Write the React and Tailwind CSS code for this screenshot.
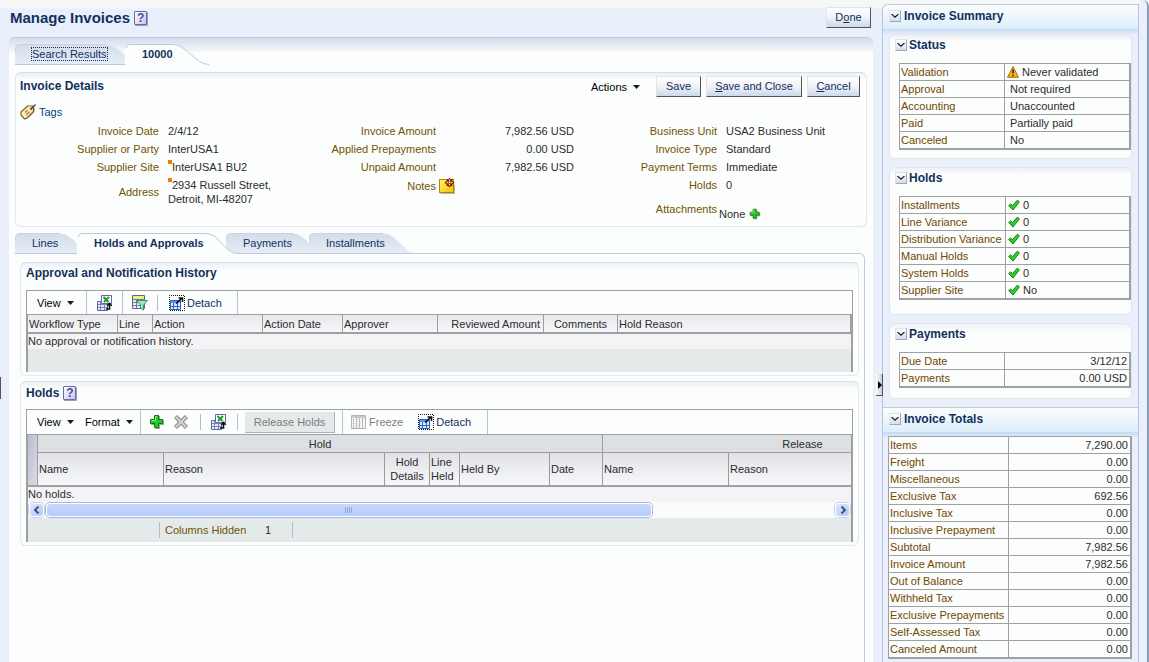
import React from 'react';

const statusRows = [
  { label: 'Validation', value: 'Never validated', icon: 'warning' },
  { label: 'Approval', value: 'Not required' },
  { label: 'Accounting', value: 'Unaccounted' },
  { label: 'Paid', value: 'Partially paid' },
  { label: 'Canceled', value: 'No' },
];

const holdRows = [
  { label: 'Installments', value: '0', icon: 'check' },
  { label: 'Line Variance', value: '0', icon: 'check' },
  { label: 'Distribution Variance', value: '0', icon: 'check' },
  { label: 'Manual Holds', value: '0', icon: 'check' },
  { label: 'System Holds', value: '0', icon: 'check' },
  { label: 'Supplier Site', value: 'No', icon: 'check' },
];

const paymentRows = [
  { label: 'Due Date', value: '3/12/12' },
  { label: 'Payments', value: '0.00 USD' },
];

const totalRows = [
  { label: 'Items', value: '7,290.00' },
  { label: 'Freight', value: '0.00' },
  { label: 'Miscellaneous', value: '0.00' },
  { label: 'Exclusive Tax', value: '692.56' },
  { label: 'Inclusive Tax', value: '0.00' },
  { label: 'Inclusive Prepayment', value: '0.00' },
  { label: 'Subtotal', value: '7,982.56' },
  { label: 'Invoice Amount', value: '7,982.56' },
  { label: 'Out of Balance', value: '0.00' },
  { label: 'Withheld Tax', value: '0.00' },
  { label: 'Exclusive Prepayments', value: '0.00' },
  { label: 'Self-Assessed Tax', value: '0.00' },
  { label: 'Canceled Amount', value: '0.00' },
];

/* ---------- icons ---------- */

const Caret = () => (
  <svg className="w-[7px] h-1 shrink-0" viewBox="0 0 7 4" fill="#1a1a1a">
    <path d="M0 0h7L3.5 4z" />
  </svg>
);

const TagIcon = () => (
  <svg className="w-4 h-4" viewBox="0 0 16 16">
    <path d="M4 15.800l5.500-3.300 4.500-5V4" fill="none" stroke="#b0b0a8" strokeWidth="1.400" />
    <path d="M1 8L7.500 2h5l1 1v4.500L6.500 14.500 4 14.300 1 11z" fill="#f8eebc" stroke="#7a6420" strokeWidth="1.200" />
    <path d="M5 8.500l2.500-2.300M6 11l3.500-3.300" stroke="#d0643c" strokeWidth="1.200" />
    <path d="M11 5L15.500.5" stroke="#404048" strokeWidth="1.300" />
    <circle cx="11.200" cy="4.800" r="1.100" fill="#404048" />
  </svg>
);

const NoteIcon = () => (
  <svg className="w-4 h-4" viewBox="0 0 16 16">
    <defs>
      <linearGradient id="note" x1="0" y1="0" x2="1" y2="1">
        <stop offset="0" stopColor="#fff36a" />
        <stop offset="1" stopColor="#f2c400" />
      </linearGradient>
    </defs>
    <path d="M1.500 15.500h14v-9" fill="none" stroke="#b4b4b0" />
    <rect x=".5" y="1.500" width="14" height="13" fill="url(#note)" stroke="#b8860b" />
    <path d="M10.500 0L15.500 4.500 10.500 9.500 5.500 4.500z" fill="#7c1c10" />
    <path d="M7.500 1.500h2M11.500 1.500h2M7.500 7.500h2M11.500 7.500h2" stroke="#7c1c10" />
    <path d="M10.500 1.500v2M10.500 5.500v2M7.500 4.500h2M11.500 4.500h2" stroke="#ffe860" strokeWidth="1.300" />
    <path d="M10 4h1v1h-1z" fill="#fff" />
  </svg>
);

const PlusIcon = ({ className }) => (
  <svg className={className} viewBox="0 0 16 16">
    <path d="M6 2h5v4h4v5h-4v4H6v-4H2V6h4z" fill="#9aa49a" />
    <path d="M5.500 1.500h4v4h4v4h-4v4h-4v-4h-4v-4h4z" fill="#28c828" stroke="#0b7a0b" />
    <path d="M6.500 2.500v4h-4M7 2.500h1" fill="none" stroke="#8cf08c" />
  </svg>
);

const DeleteIcon = () => (
  <svg className="w-4 h-4" viewBox="0 0 16 16">
    <path d="M2.500 2.500l11 11M13.500 2.500l-11 11" stroke="#8c8c8c" strokeWidth="4.300" />
    <path d="M3 3l10 10M13 3L3 13" stroke="#d2d2d2" strokeWidth="2.300" />
  </svg>
);

const ExcelIcon = () => (
  <svg className="w-4 h-4" viewBox="0 0 16 16">
    <path d="M.5 6.500h10v9H.5z" fill="#e4e8f8" stroke="#5c64a4" />
    <path d="M1 9.500h9M1 12.500h9M3.500 7v8M7.500 7v8" stroke="#7c84bc" />
    <path d="M4.500.5h10v8h-10z" fill="#fff" stroke="#6068a8" />
    <path d="M6.500 2l5 5M12 2L7 7" stroke="#1c9c30" strokeWidth="2" />
    <path d="M9 14h3.500V9.500M10.300 10.800l2.200-2.300 2.300 2.300" fill="none" stroke="#111" strokeWidth="1.600" />
  </svg>
);

const FilterIcon = () => (
  <svg className="w-4 h-4" viewBox="0 0 16 16">
    <path d="M.5.5h12v13H.5z" fill="#e8ecf8" stroke="#5c64a4" />
    <path d="M1 1h11v3H1z" fill="#f6ec6c" />
    <path d="M1 4.500h11M1 7.500h11M1 10.500h11M4.500 5v8M8.500 5v8" stroke="#7078b0" />
    <path d="M4.500 5.500h11l-4 4.500v5l-3-2v-3z" fill="#a4e4b8" stroke="#3c9464" />
  </svg>
);

const DetachIcon = () => (
  <svg className="w-4 h-4" viewBox="0 0 16 16">
    <path d="M.5.5h15v15H.5z" fill="#fff" stroke="#111" strokeDasharray="1 1" strokeDashoffset=".5" />
    <path d="M1.500 5.500h10v9h-10z" fill="#dceafc" stroke="#2c64cc" />
    <path d="M2 6h9v2H2z" fill="#5c94ec" />
    <path d="M2 11.500h9M4.500 8v6M8.500 8v6" stroke="#2c64cc" />
    <path d="M7 8.500l5.500-5M9.500 3h4v4" fill="none" stroke="#111" strokeWidth="1.600" />
  </svg>
);

const FreezeIcon = () => (
  <svg className="w-4 h-4" viewBox="0 0 16 16">
    <path d="M.5 1.500h14v13H.5z" fill="#f4f4f4" stroke="#b4b4b4" />
    <path d="M1 2h13v2H1z" fill="#c8c8c8" />
    <path d="M5.500 2v12M8.500 4v10M11.500 4v10" stroke="#b8b8b8" />
    <path d="M2.500 5v9" stroke="#909090" strokeDasharray="1 1" />
  </svg>
);

const WarningIcon = () => (
  <svg className="w-3 h-3 shrink-0" viewBox="0 0 12 12">
    <path d="M6 .6L11.500 11.300H.5z" fill="#fcb414" stroke="#b06c00" />
    <path d="M6 3.500v4M6 8.700v1.500" stroke="#222" strokeWidth="1.500" />
  </svg>
);

const CheckIcon = () => (
  <svg className="w-3 h-3 shrink-0" viewBox="0 0 12 12">
    <path d="M.7 6.500l2-1.500 1.800 1.700L9.300 1.200l2.100 1.600L5 11z" fill="#30d030" stroke="#0c800c" strokeLinejoin="round" />
  </svg>
);

const HelpButton = () => (
  <button
    type="button"
    aria-label="Help"
    className="flex h-[14px] w-[13px] items-center justify-center rounded-[1px] border border-[#6a6aa8] bg-linear-to-br from-white to-[#c4c4ec] text-xs leading-3 font-bold text-[#4c4c94] shadow-[1px_1px_0_#9c9cb8]"
  >
    ?
  </button>
);

/* ---------- shared parts ---------- */

const PushButton = ({ children, className = '' }) => (
  <button
    type="button"
    className={`h-[21px] border border-t-[#e4e4e4] border-l-[#e4e4e4] border-r-[#555] border-b-[#555] bg-linear-to-b from-[#fdfefe] via-[#f0f3f8] to-[#ccd8ea] pb-0.5 text-center text-[#12305c] ${className}`}
  >
    {children}
  </button>
);

const MenuButton = ({ children, className = '' }) => (
  <button type="button" className={`flex items-center gap-1.5 text-black ${className}`}>
    {children}
    <Caret />
  </button>
);

const ToolDivider = () => <span className="h-full w-px bg-[#b4c4dc]" />;
const ShortDivider = () => <span className="h-4 w-px bg-[#b0bccc]" />;

const DetachButton = () => (
  <button type="button" className="flex items-center gap-0.5 text-[#12305c]">
    <DetachIcon />
    Detach
  </button>
);

// Left-rounded tab whose right edge slopes away
const Tab = ({ width, slope, fade, children, className }) => {
  const end = fade
    ? `H${width - slope} C${width - slope + 14} 0.5 ${width - 12} 20.5 ${width} 20.5`
    : `H${width - slope} Q${width - slope + 9} 1 ${width} 11 V20.5`;
  return (
    <a href="#" className={`relative h-[21px] pl-[17px] leading-[21px] text-[#12305c] ${className}`}>
      <svg className="absolute inset-0 h-full w-full" viewBox={`0 0 ${width} 21`} preserveAspectRatio="none">
        <defs>
          <linearGradient id="tabFill" x1="0" y1="0" x2="0" y2="1">
            <stop offset="0" stopColor="#d3dde9" />
            <stop offset="1" stopColor="#e6edf8" />
          </linearGradient>
        </defs>
        <path d={`M0 20.5 V5 Q0 .5 5 .5 ${end} Z`} fill="url(#tabFill)" />
        <path d={`M0 20.500 H${width}`} stroke="#bcc9dc" />
        <path d={`M.5 8 V5 Q.5 .5 5 .5 H${width - slope}`} fill="none" stroke="#c8d4e2" />
      </svg>
      <span className="relative">{children}</span>
    </a>
  );
};

const ActiveTab = ({ width, slope, children, className }) => (
  <a href="#" aria-current="page" className={`relative z-10 h-[21px] pl-[17px] leading-[21px] font-bold text-[#12305c] ${className}`}>
    <svg className="absolute inset-0 h-full w-full" viewBox={`0 0 ${width} 21`} preserveAspectRatio="none">
      <path d={`M0 21 V5 Q1 .5 5 .5 H${width - slope} C${width - slope + 14} 0.5 ${width - 14} 20.5 ${width} 20.5 V21 Z`} fill="#fcfdfd" />
      <path d={`M1 4 Q2 .5 5 .5 H${width - slope} C${width - slope + 14} 0.5 ${width - 14} 20.5 ${width} 20.5`} fill="none" stroke="#bcc9dc" />
    </svg>
    <span className="relative">{children}</span>
  </a>
);

const Panel = ({ children, className = '' }) => (
  <section className={`rounded-md border border-[#e2e8ee] border-t-[#d4dfec] bg-linear-to-b from-[#eeeff6] via-[#fcfdfd] via-[7px] to-[#fcfdfd] ${className}`}>
    {children}
  </section>
);

const Term = ({ children }) => <dt className="self-center text-right text-[#705400]">{children}</dt>;
const Value = ({ children, className = 'pl-[9px]' }) => <dd className={`py-0.5 ${className}`}>{children}</dd>;
const Marker = () => <span className="h-1 w-1 bg-[#ec7c0c]" />;

const ToggleButton = ({ label }) => (
  <button
    type="button"
    aria-label={label}
    className="flex h-3 w-3 items-center justify-center border border-[#e0e4ea] border-r-[#9ca8bc] border-b-[#9ca8bc] bg-linear-to-b from-white to-[#d4dce8]"
  >
    <svg className="h-1 w-2" viewBox="0 0 8 4">
      <path d="M.5 0L4 3.200 7.500 0" fill="none" stroke="#222" strokeWidth="1.200" />
    </svg>
  </button>
);

const SummaryTable = ({ rows, labelWidth, numeric, name }) => (
  <table aria-label={name} className="w-full table-fixed border-separate border-spacing-0 border border-[#a0a0a0] bg-[#fcfdfd]">
    <colgroup>
      <col className={labelWidth} />
      <col />
    </colgroup>
    <tbody>
      {rows.map(row => (
        <tr key={row.label}>
          <th scope="row" className="border-r border-b border-[#a0a0a0] pl-px text-left leading-4 font-normal whitespace-nowrap text-[#704800]">
            {row.label}
          </th>
          <td className={`border-r border-b border-[#a0a0a0] leading-4 ${numeric ? 'pr-0.5 text-right' : row.icon ? 'pl-0.5' : 'pl-[5px]'}`}>
            {row.icon ? (
              <span className="flex items-center gap-[3px]">
                {row.icon === 'warning' ? <WarningIcon /> : <CheckIcon />}
                {row.value}
              </span>
            ) : (
              row.value
            )}
          </td>
        </tr>
      ))}
    </tbody>
  </table>
);

const SummaryCard = ({ title, children, className = 'pb-2' }) => (
  <section className={`mx-1.5 rounded-md border border-[#e0e6ec] bg-linear-to-b from-[#eff0f5] via-[#fcfdfd] via-[7px] to-[#fcfdfd] ${className}`}>
    <h3 className="flex h-5 items-center gap-0.5 pl-[5px] text-xs font-bold text-[#12305c]">
      <ToggleButton label={`Collapse ${title}`} />
      {title}
    </h3>
    <div className="mt-2 pl-[9px]">{children}</div>
  </section>
);

const SummaryHeader = ({ children }) => (
  <h2 className="flex h-[22px] items-center gap-[3px] pl-1.5 text-xs font-bold text-[#12305c]">
    <ToggleButton label={`Collapse ${children}`} />
    {children}
  </h2>
);

/* ---------- main sections ---------- */

const InvoiceDetails = () => (
  <Panel className="mx-1.5 mt-[7px] pb-0.5">
    <div className="flex items-start justify-between pt-[3px] pr-1.5 pl-1">
      <h2 className="text-xs leading-[21px] font-bold text-[#12305c]">Invoice Details</h2>
      <div className="flex items-center gap-[5px]">
        <MenuButton className="mr-[11px]">Actions</MenuButton>
        <PushButton className="w-[45px]">Save</PushButton>
        <PushButton className="w-24"><u>S</u>ave and Close</PushButton>
        <PushButton className="w-[53px]"><u>C</u>ancel</PushButton>
      </div>
    </div>
    <a href="#" className="mt-1.5 ml-1 flex h-[18px] w-fit items-center gap-[3px] text-[#003d84]">
      <TagIcon />
      Tags
    </a>
    <div className="mt-px grid grid-cols-[276px_277px_1fr] items-start leading-[14px]">
      <dl className="grid grid-cols-[143px_1fr]">
        <Term>Invoice Date</Term>
        <Value>2/4/12</Value>
        <Term>Supplier or Party</Term>
        <Value>InterUSA1</Value>
        <Term>Supplier Site</Term>
        <Value><span className="flex"><Marker />InterUSA1 BU2</span></Value>
        <Term>Address</Term>
        <Value>
          <span className="flex"><Marker />2934 Russell Street,</span>
          Detroit, MI-48207
        </Value>
      </dl>
      <dl className="grid grid-cols-[144px_138px]">
        <Term>Invoice Amount</Term>
        <Value className="text-right">7,982.56 USD</Value>
        <Term>Applied Prepayments</Term>
        <Value className="text-right">0.00 USD</Value>
        <Term>Unpaid Amount</Term>
        <Value className="text-right">7,982.56 USD</Value>
        <Term>Notes</Term>
        <Value className="pl-[3px]">
          <button type="button" aria-label="Add note" className="block"><NoteIcon /></button>
        </Value>
      </dl>
      <dl className="grid grid-cols-[148px_1fr]">
        <Term>Business Unit</Term>
        <Value>USA2 Business Unit</Value>
        <Term>Invoice Type</Term>
        <Value>Standard</Value>
        <Term>Payment Terms</Term>
        <Value>Immediate</Value>
        <Term>Holds</Term>
        <Value>0</Value>
        <Term>Attachments</Term>
        <dd className="flex h-[30px] items-center gap-1 pt-2.5 pl-0.5">
          None
          <button type="button" aria-label="Add attachment"><PlusIcon className="h-3 w-3" /></button>
        </dd>
      </dl>
    </div>
  </Panel>
);

const headCell = 'border-r border-[#9c9c9c] px-px text-left font-normal';

const ApprovalHistory = () => (
  <Panel className="mx-[5px] mt-2 pb-[3px]">
    <h2 className="pl-[5px] text-xs leading-5 font-bold text-[#12305c]">Approval and Notification History</h2>
    <div className="mx-[5px] mt-[7px] border border-b-0 border-[#a0a0a0]">
      <div className="flex h-[23px] items-center">
        <MenuButton className="w-[59px] pl-2.5">View</MenuButton>
        <ToolDivider />
        <button type="button" aria-label="Export to Excel" className="flex w-[35px] justify-center"><ExcelIcon /></button>
        <ToolDivider />
        <button type="button" aria-label="Query by example" className="flex w-[34px] justify-center"><FilterIcon /></button>
        <ShortDivider />
        <span className="flex w-[79px] pl-[11px]"><DetachButton /></span>
        <ToolDivider />
      </div>
      <div className="border-t border-r border-l border-[#a0a0a0] bg-[#e4eaea] pb-[23px]">
        <table className="w-full table-fixed border-separate border-spacing-0">
          <colgroup>
            <col className="w-[90px]" />
            <col className="w-[35px]" />
            <col className="w-[110px]" />
            <col className="w-20" />
            <col className="w-[95px]" />
            <col className="w-[106px]" />
            <col className="w-[74px]" />
            <col />
          </colgroup>
          <thead>
            <tr className="h-[17px] bg-linear-to-b from-[#e8e8ec] to-[#f6f7fa]">
              <th className={headCell}>Workflow Type</th>
              <th className={headCell}>Line</th>
              <th className={headCell}>Action</th>
              <th className={headCell}>Action Date</th>
              <th className={headCell}>Approver</th>
              <th className="border-r border-[#9c9c9c] pr-[3px] text-right font-normal">Reviewed Amount</th>
              <th className="border-r border-[#9c9c9c] text-center font-normal">Comments</th>
              <th className={headCell}>Hold Reason</th>
            </tr>
          </thead>
          <tbody>
            <tr>
              <td colSpan={8} className="border-t-2 border-[#a0a0a0] bg-[#f4f4f7] leading-[15px]">No approval or notification history.</td>
            </tr>
          </tbody>
        </table>
      </div>
    </div>
  </Panel>
);

const ScrollArrow = ({ label, d }) => (
  <button type="button" aria-label={label} className="flex h-[14px] w-[15px] shrink-0 items-center justify-center rounded-sm border border-white bg-linear-to-br from-[#dce6fe] to-[#b4c8f6] shadow-[0_0_0_1px_#c4d2ee]">
    <svg className="h-2 w-2" viewBox="0 0 8 8">
      <path d={d} fill="none" stroke="#3c5484" strokeWidth="2" />
    </svg>
  </button>
);

const HoldsTable = () => (
  <Panel className="mx-[5px] mt-[5px] pb-[3px]">
    <div className="flex h-[22px] items-center gap-1 pl-[5px]">
      <h2 className="text-xs font-bold text-[#12305c]">Holds</h2>
      <HelpButton />
    </div>
    <div className="mx-[5px] mt-[5px] border border-b-0 border-[#a0a0a0]">
      <div className="flex h-6 items-center">
        <MenuButton className="w-12 pl-2.5">View</MenuButton>
        <MenuButton className="w-[65px] pl-2.5">Format</MenuButton>
        <ToolDivider />
        <div className="flex w-[59px] items-center gap-2 pl-2">
          <button type="button" aria-label="Add hold"><PlusIcon className="h-4 w-4" /></button>
          <button type="button" aria-label="Delete hold" disabled><DeleteIcon /></button>
        </div>
        <ShortDivider />
        <button type="button" aria-label="Export to Excel" className="flex w-9 justify-center"><ExcelIcon /></button>
        <ShortDivider />
        <button type="button" disabled className="mx-[7px] h-[21px] w-[90px] border-r border-b border-[#a8b4bc] bg-[#e4eaea] text-[#7c7c7c]">
          Release Holds
        </button>
        <ToolDivider />
        <div className="flex w-36 items-center gap-[15px] pl-2">
          <button type="button" disabled className="flex items-center gap-0.5 text-[#7c7c7c]">
            <FreezeIcon />
            Freeze
          </button>
          <DetachButton />
        </div>
        <ToolDivider />
      </div>
      <div className="border-t border-r border-l border-[#a0a0a0] bg-[#e4eaea]">
        <div className="overflow-hidden">
          <table className="w-[974px] table-fixed border-separate border-spacing-0">
            <colgroup>
              <col className="w-[10px]" />
              <col className="w-[126px]" />
              <col className="w-[221px]" />
              <col className="w-[45px]" />
              <col className="w-[30px]" />
              <col className="w-[90px]" />
              <col className="w-[53px]" />
              <col className="w-[126px]" />
              <col />
            </colgroup>
            <thead>
              <tr className="h-[18px] bg-[#dce0e2]">
                <td rowSpan={2} className="border-r border-[#9c9c9c] bg-linear-to-br from-[#b8bcd0] to-[#dcdce8]" />
                <th colSpan={6} className="border-r border-b border-[#9c9c9c] font-normal">Hold</th>
                <th colSpan={2} className="border-b border-[#9c9c9c] font-normal">Release</th>
              </tr>
              <tr className="h-8 bg-linear-to-b from-[#e2e2e6] to-[#f6f8fb] leading-[14px]">
                <th className={headCell}>Name</th>
                <th className={headCell}>Reason</th>
                <th className="border-r border-[#9c9c9c] text-center font-normal">Hold Details</th>
                <th className={headCell}>Line Held</th>
                <th className={headCell}>Held By</th>
                <th className={headCell}>Date</th>
                <th className={headCell}>Name</th>
                <th className={headCell}>Reason</th>
              </tr>
            </thead>
            <tbody>
              <tr>
                <td colSpan={9} className="border-t-2 border-[#a0a0a0] bg-[#f4f4f7] leading-[15px]">No holds.</td>
              </tr>
            </tbody>
          </table>
        </div>
        <div className="flex h-4 items-center gap-0.5 bg-[#fafbfd] px-px">
          <ScrollArrow label="Scroll left" d="M5.500 .5L2 4l3.500 3.500" />
          <div className="flex-1">
            <div className="flex h-[14px] w-[77%] items-center justify-center gap-px rounded-sm border border-white bg-linear-to-b from-[#c8d8fc] to-[#b8ccf8] shadow-[0_0_0_1px_#a4b8e0]">
              <span className="h-1.5 w-px bg-[#8ca8e4]" />
              <span className="h-1.5 w-px bg-[#8ca8e4]" />
              <span className="h-1.5 w-px bg-[#8ca8e4]" />
              <span className="h-1.5 w-px bg-[#8ca8e4]" />
            </div>
          </div>
          <ScrollArrow label="Scroll right" d="M2.500 .5L6 4 2.500 7.500" />
        </div>
        <div className="flex h-6 items-center pl-[131px]">
          <ShortDivider />
          <span className="w-[105px] pl-[5px] text-[#705400]">Columns Hidden</span>
          <span className="w-[27px]">1</span>
          <ShortDivider />
        </div>
      </div>
    </div>
  </Panel>
);

const InvoiceSummary = () => (
  <aside className="relative w-[257px] shrink-0 rounded-tl-md border-r border-l border-[#b8c4e0] bg-[#e9f0fb]">
    <div className="rounded-tl-md border-t border-[#c4cce0] bg-linear-to-b from-[#fcfdfd] to-[#dceefa] pb-0.5">
      <SummaryHeader>Invoice Summary</SummaryHeader>
    </div>
    <div className="bg-linear-to-b from-[#c8dcf4] to-[#e9f0fb] to-[6px] pt-[5px] pb-2">
      <SummaryCard title="Status">
        <SummaryTable name="Status" rows={statusRows} labelWidth="w-[105px]" />
      </SummaryCard>
      <SummaryCard title="Holds" className="mt-2 pb-[14px]">
        <SummaryTable name="Holds" rows={holdRows} labelWidth="w-[106px]" />
      </SummaryCard>
      <SummaryCard title="Payments" className="mt-2 pb-2.5">
        <SummaryTable name="Payments" rows={paymentRows} labelWidth="w-[105px]" numeric />
      </SummaryCard>
    </div>
    <div className="border-t border-[#c4ccd8] bg-linear-to-b from-[#fcfdfd] to-[#dceefa] pb-0.5">
      <SummaryHeader>Invoice Totals</SummaryHeader>
    </div>
    <div className="bg-linear-to-b from-[#c0d8f4] to-[#e9f0fb] to-[6px] pt-1 pr-1.5 pl-[5px]">
      <SummaryTable name="Invoice Totals" rows={totalRows} labelWidth="w-[120px]" numeric />
    </div>
    <button
      type="button"
      aria-label="Collapse pane"
      className="absolute top-[370px] -left-[7px] flex h-[22px] w-[7px] items-center justify-end border-r border-b border-[#555] bg-linear-to-r from-white to-[#c4ccd8]"
    >
      <svg className="h-2 w-1" viewBox="0 0 4 8">
        <path d="M0 0l4 4-4 4z" />
      </svg>
    </button>
  </aside>
);

export default function App() {
  return (
    <div className="relative flex min-h-screen w-full items-stretch overflow-hidden bg-linear-to-b from-[#f6f7f7] from-[8px] to-[#e9f0fb] to-[9px] font-['Liberation_Sans',Arial,sans-serif] text-[11px] leading-[14px] text-[#2c2c2c]">
      <main className="flex min-w-0 flex-1 flex-col px-[9px] pt-[7px]">
        <header className="flex items-start justify-between pr-0.5">
          <div className="flex h-[22px] items-center gap-1 pl-px">
            <h1 className="text-[15px] leading-[22px] font-bold text-[#12305c]">Manage Invoices</h1>
            <HelpButton />
          </div>
          <PushButton className="w-[45px]">D<u>o</u>ne</PushButton>
        </header>
        <div className="mt-2 flex flex-1 flex-col rounded-t-md border-t border-[#bcc8dc] bg-linear-to-b from-[#d4deec] via-[#f2f3f7] via-[12px] to-[#fcfdfd] to-[15px] pt-1.5">
          <nav className="flex pl-1.5">
            <Tab width={110} slope={20} className="w-[110px]">
              <span className="outline-1 outline-[#12305c] outline-dotted">Search Results</span>
            </Tab>
            <ActiveTab width={84} slope={36} className="w-[84px]">10000</ActiveTab>
          </nav>
          <InvoiceDetails />
          <div className="mt-1.5 mr-2 ml-1.5 flex flex-1 flex-col">
            <nav className="-mb-px flex">
              <Tab width={62} slope={17} className="w-[62px]">Lines</Tab>
              <ActiveTab width={161} slope={32} className="-mr-3 w-[161px]">Holds and Approvals</ActiveTab>
              <Tab width={83} slope={16} className="w-[83px]">Payments</Tab>
              <Tab width={107} slope={33} fade className="w-[107px]">Installments</Tab>
            </nav>
            <div className="flex-1 rounded-tr-md border-t border-r border-[#bcc9dc]">
              <ApprovalHistory />
              <HoldsTable />
            </div>
          </div>
        </div>
      </main>
      <div className="flex shrink-0 pt-1">
        <InvoiceSummary />
      </div>
      <div className="w-2.5 shrink-0 rounded-tr-md border-r-2 border-[#8c9cb8] bg-[#e9f0fb]" />
      <span className="absolute top-[377px] left-0 h-[22px] w-px bg-[#555]" />
    </div>
  );
}
